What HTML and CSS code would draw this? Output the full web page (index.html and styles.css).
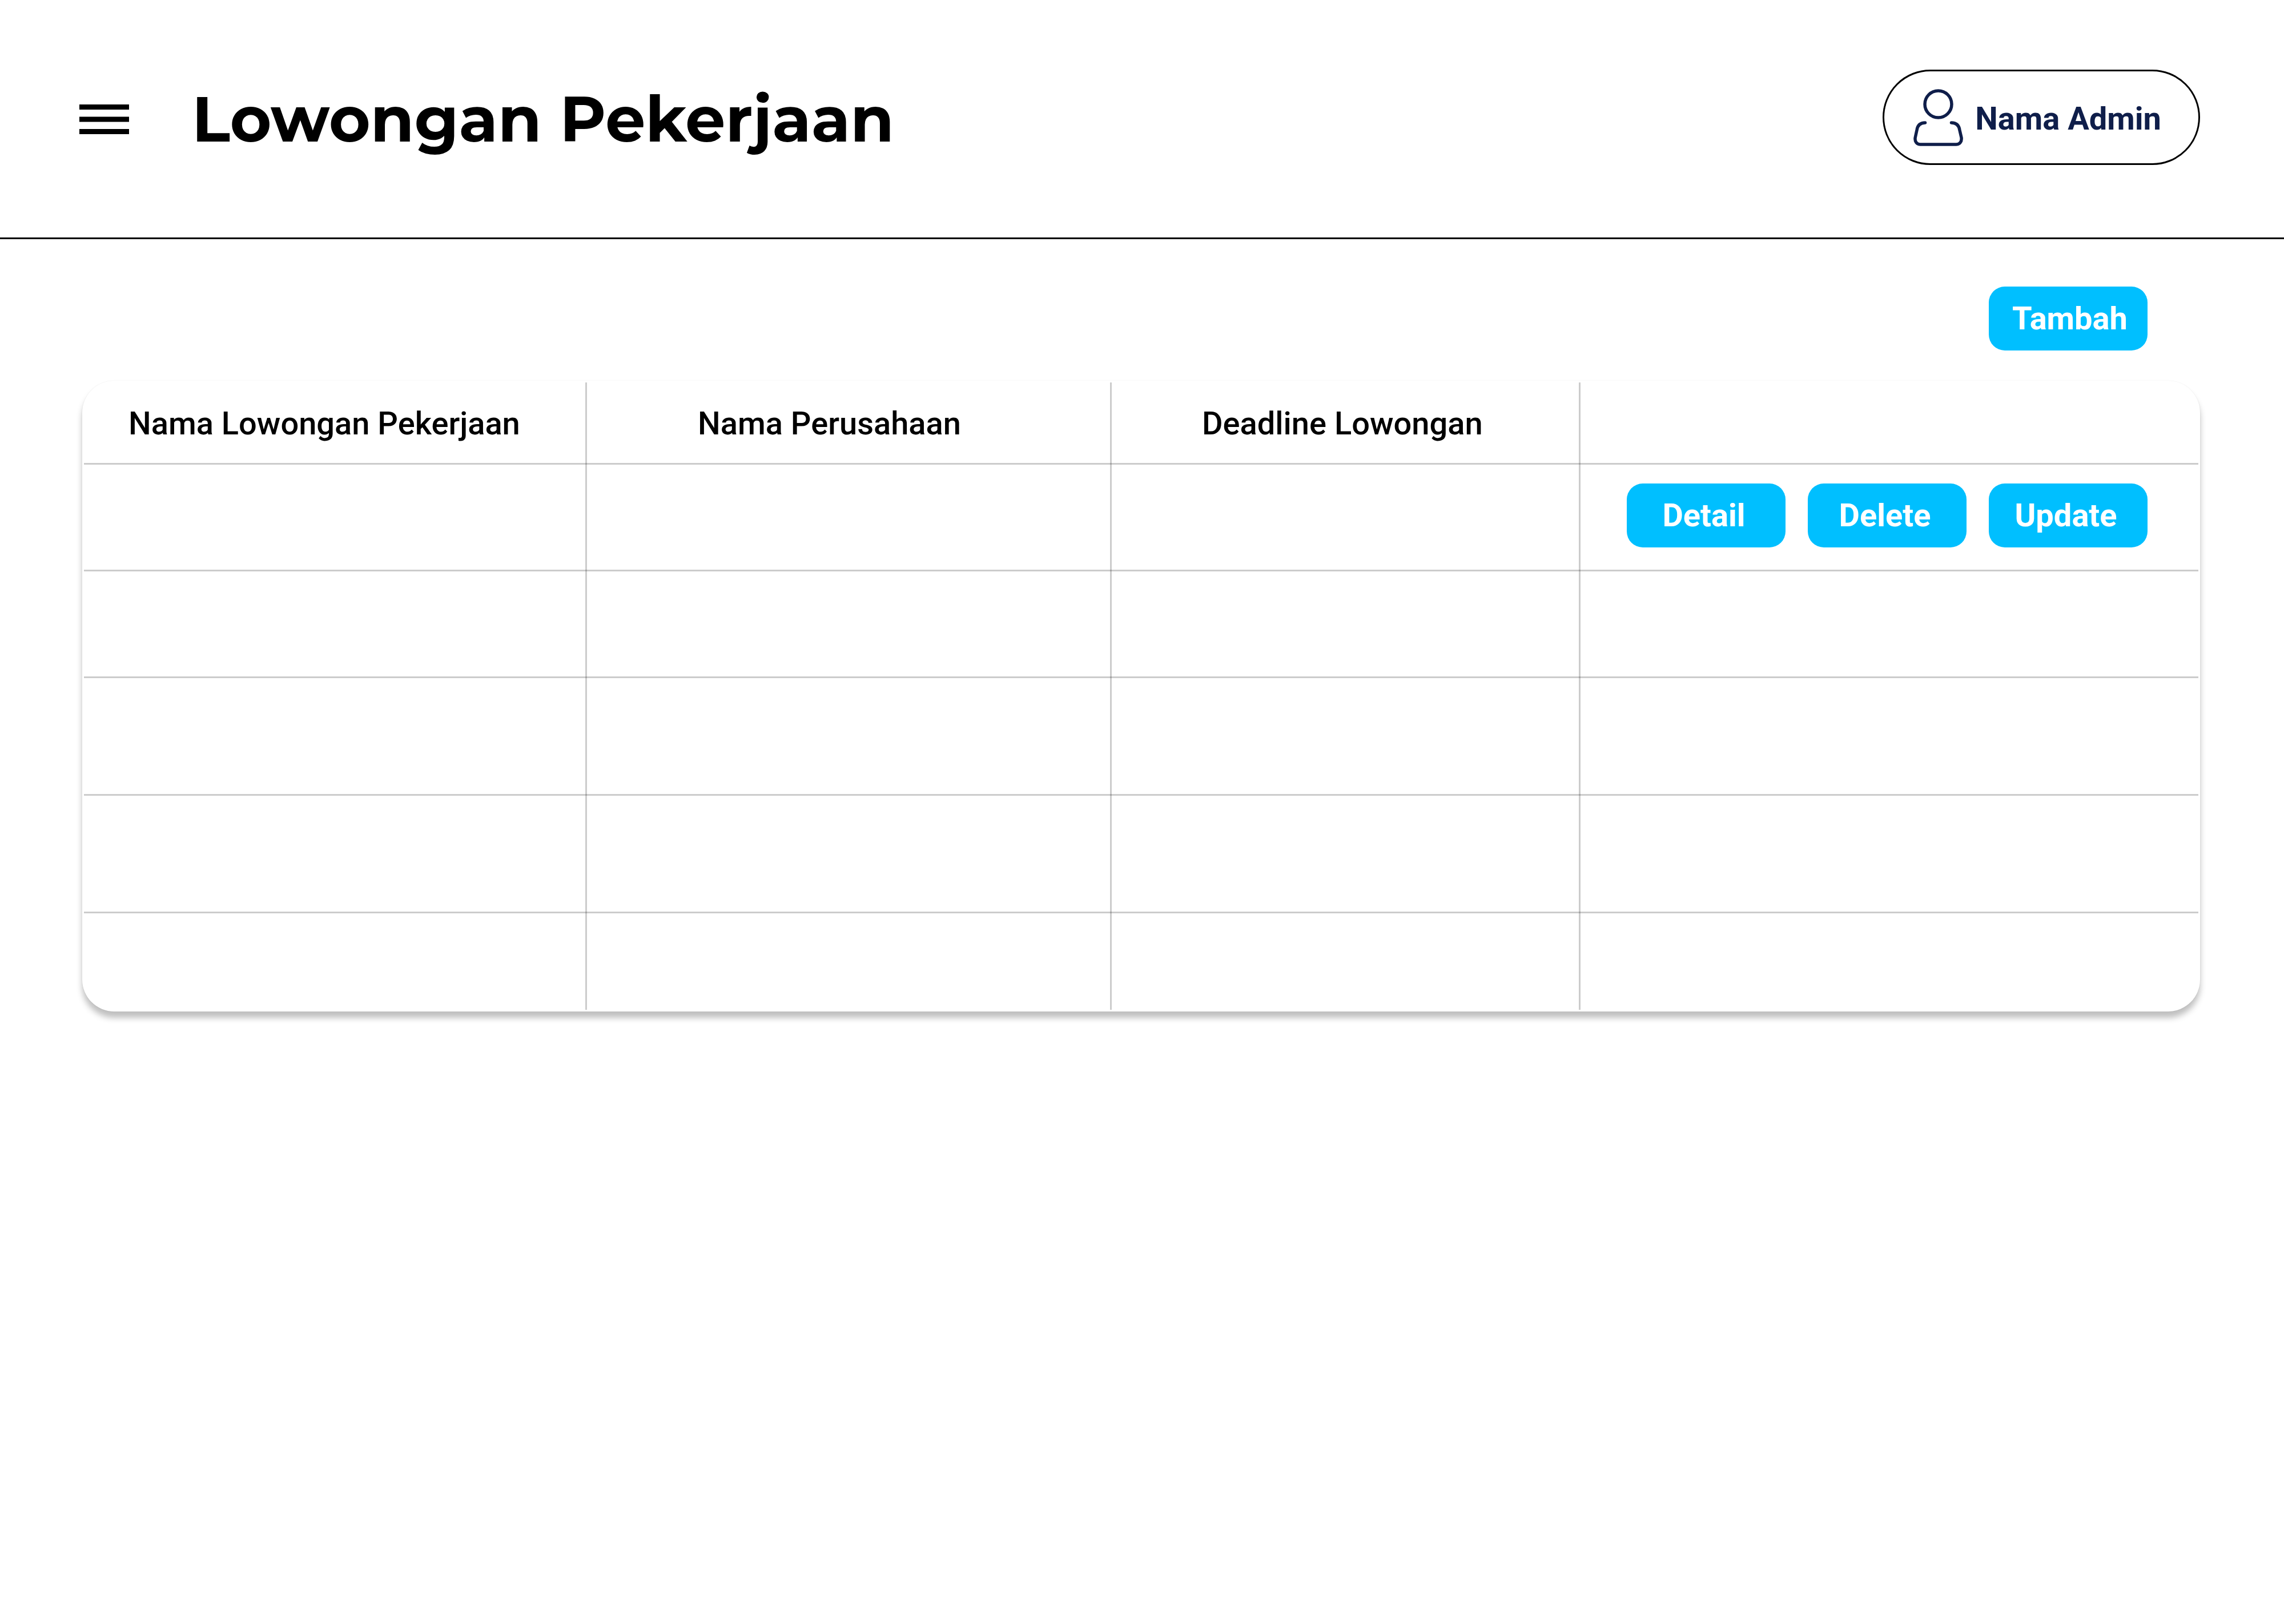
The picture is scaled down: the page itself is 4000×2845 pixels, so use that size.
FILE: index.html
```html
<!DOCTYPE html>
<html lang="id">
<head>
  <meta charset="utf-8">
  <meta name="viewport" content="width=device-width, initial-scale=1">
  <title>Lowongan Pekerjaan</title>
  <link rel="stylesheet" href="styles.css">
</head>
<body>
  <header class="topbar">
    <div class="heading">
      <button class="menu-button" type="button" aria-label="Menu">
        <svg class="menu-icon" viewBox="0 0 87 52" aria-hidden="true">
          <rect x="0" y="0" width="87" height="9"/>
          <rect x="0" y="21.5" width="87" height="9"/>
          <rect x="0" y="43" width="87" height="9"/>
        </svg>
      </button>
      <h1 class="page-title">Lowongan Pekerjaan</h1>
    </div>
    <button class="account" type="button">
      <svg class="account-icon" viewBox="0 0 88 100" aria-hidden="true">
        <ellipse cx="43.500" cy="26.500" rx="23.500" ry="23.500"/>
        <path d="M20.500 59C11 59 7 65 6 72L3.200 85C2 92 6 97 12 97H75C81 97 85 92 84 85L81 72C80 65 76 59 66.500 59"/>
      </svg>
      <span class="account-name">Nama Admin</span>
    </button>
  </header>

  <main class="content">
    <div class="toolbar">
      <button class="button" type="button">Tambah</button>
    </div>

    <div class="card">
      <table class="jobs">
        <colgroup>
          <col class="col-job">
          <col class="col-company">
          <col class="col-deadline">
          <col>
        </colgroup>
        <thead>
          <tr>
            <th class="head-job" scope="col">Nama Lowongan Pekerjaan</th>
            <th class="head-company" scope="col">Nama Perusahaan</th>
            <th class="head-deadline" scope="col">Deadline Lowongan</th>
            <td></td>
          </tr>
        </thead>
        <tbody>
          <tr>
            <td></td>
            <td></td>
            <td></td>
            <td class="cell-actions">
              <div class="actions">
                <button class="button" type="button">Detail</button>
                <button class="button" type="button">Delete</button>
                <button class="button" type="button">Update</button>
              </div>
            </td>
          </tr>
          <tr><td></td><td></td><td></td><td></td></tr>
          <tr class="row-tall"><td></td><td></td><td></td><td></td></tr>
          <tr class="row-tall"><td></td><td></td><td></td><td></td></tr>
          <tr class="row-last"><td></td><td></td><td></td><td></td></tr>
        </tbody>
      </table>
    </div>
  </main>
</body>
</html>
```

FILE: styles.css
```css
:root {
  --line: rgba(0, 0, 0, 0.2);
  --accent: #00bfff;
  --navy: #0f1e4a;
}

* {
  box-sizing: border-box;
}

body {
  margin: 0;
  background: #fff;
  color: #000;
  font-family: Roboto, "Liberation Sans", sans-serif;
  font-size: 56px;
  line-height: 66px;
}

button {
  margin: 0;
  padding: 0;
  border: 0;
  background: none;
  color: inherit;
  font: inherit;
  cursor: pointer;
}

.topbar {
  display: flex;
  align-items: center;
  justify-content: space-between;
  padding: 122px 147px 127px 139px;
  border-bottom: 3px solid #000;
}

.heading {
  display: flex;
  align-items: center;
  gap: 110px;
  padding-top: 6px;
}

.menu-button {
  display: flex;
}

.menu-icon {
  width: 87px;
  height: 52px;
}

.page-title {
  margin: 0;
  font-family: Montserrat, Inter, sans-serif;
  font-size: 111px;
  font-weight: 700;
  line-height: 136px;
}

.account {
  display: flex;
  align-items: center;
  gap: 20px;
  height: 167px;
  padding: 0 65px 0 51px;
  border: 3px solid #000;
  border-radius: 84px;
  color: var(--navy);
  font-weight: 700;
}

.account-icon {
  width: 88px;
  height: 100px;
  fill: none;
  stroke: currentColor;
  stroke-width: 5.5;
  stroke-linecap: round;
}

.account-name {
  padding-top: 5px;
}

.content {
  padding: 83px 147px 83px 144px;
}

.toolbar {
  display: flex;
  justify-content: flex-end;
  padding: 0 92px 53px 0;
}

.button {
  width: 278px;
  height: 112px;
  border-radius: 28px;
  background: var(--accent);
  color: #fff;
  font-weight: 700;
}

.toolbar .button {
  padding-left: 6px;
}

.card {
  padding: 3px;
  border-radius: 56px;
  background: #fff;
  box-shadow:
    0 0 2px rgba(0, 0, 0, 0.08),
    0 11px 11px rgba(0, 0, 0, 0.25);
}

.jobs {
  width: 100%;
  table-layout: fixed;
  border-spacing: 0;
}

.col-job {
  width: 881px;
}

.col-company {
  width: 919px;
}

.col-deadline {
  width: 821px;
}

/* Rules are painted as translucent layers so that they darken where they cross. */
.jobs th,
.jobs td {
  height: 187px;
  padding: 0;
  background:
    linear-gradient(var(--line), var(--line)) right / 3px 100% no-repeat,
    linear-gradient(var(--line), var(--line)) bottom / 100% 3px no-repeat;
  font-weight: 500;
  text-align: left;
}

.jobs thead th,
.jobs thead td {
  height: 144px;
}

.jobs .row-tall td {
  height: 206px;
}

.jobs .row-last td {
  height: 169px;
  background-size: 3px 100%, 0 0;
}

.jobs tr > :last-child {
  background-size: 0 0, 100% 3px;
}

.jobs .row-last td:last-child {
  background: none;
}

.jobs .head-job {
  padding-left: 78px;
}

.jobs .head-company {
  padding-left: 194px;
}

.jobs .head-deadline {
  padding-left: 158px;
}

.jobs .cell-actions {
  padding: 33px 89px 0 0;
  vertical-align: top;
}

.actions {
  display: flex;
  justify-content: flex-end;
  gap: 39px;
}

.actions .button {
  padding-right: 8px;
}
```
